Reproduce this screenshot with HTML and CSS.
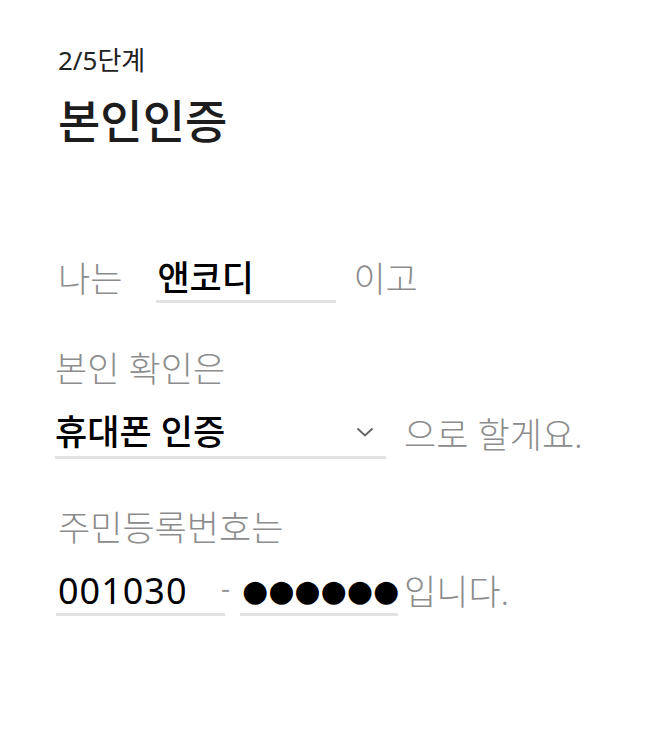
FILE: index.html
```html
<!DOCTYPE html>
<html>
<head>
  <title>본인인증</title>
  <link rel="stylesheet" href="styles.css">
</head>
<body>
  <div class="page">
    <p class="step">2/5단계</p>
    <h1 class="title">본인인증</h1>

    <div class="row row-name">
      <span class="label">나는</span>
      <input class="field name-field" type="text" value="앤코디">
      <span class="label">이고</span>
    </div>

    <p class="label question method-question">본인 확인은</p>
    <div class="row row-method">
      <div class="select-box">
        <span class="select-value">휴대폰 인증</span>
        <svg class="chevron" width="18" height="10" viewBox="0 0 18 10">
          <path d="M1.5 1.5 L9 8.5 L16.5 1.5" fill="none" stroke="#666" stroke-width="2"/>
        </svg>
      </div>
      <span class="label">으로 할게요.</span>
    </div>

    <p class="label question id-question">주민등록번호는</p>
    <div class="row row-id">
      <input class="field birth-field" type="text" value="001030">
      <span class="dash">-</span>
      <span class="field secret-field">●●●●●●</span>
      <span class="label tail">입니다.</span>
    </div>
  </div>
</body>
</html>
```

FILE: styles.css
```css
/* 본인인증 step page */
body {
  margin: 0;
  background: #fff;
  font-family: "Noto Sans", "Noto Sans CJK KR", sans-serif;
  color: #1d1d1d;
}

.page {
  padding: 42px 58px 40px 58px;
}

p {
  margin: 0;
}

.step {
  font-size: 26px;
  line-height: 36px;
  color: #222;
}

.title {
  margin: 14px 0 0 0;
  font-size: 46px;
  line-height: 56px;
  font-weight: 500;
  color: #1d1d1d;
}

.row {
  display: flex;
  align-items: flex-end;
}

.label {
  font-size: 35px;
  line-height: 48px;
  font-weight: 300;
  color: #8c8c8c;
}

.field {
  font-family: "Noto Sans", "Noto Sans CJK KR", sans-serif;
  font-size: 35px;
  line-height: 45px;
  height: 45px;
  padding: 0;
  border: none;
  border-bottom: 3px solid #e2e2e2;
  background: transparent;
  color: #000;
  outline: none;
}

.row-name {
  margin-top: 107px;
}

.name-field {
  width: 179px;
  margin: 0 17px 0 34px;
  padding-left: 1px;
  font-weight: 500;
}

.method-question {
  margin-top: 42px;
  margin-left: -3px;
}

.row-method {
  margin-top: 15px;
  margin-left: -3px;
}

.select-box {
  display: flex;
  align-items: center;
  width: 331px;
  height: 48px;
  border-bottom: 3px solid #e2e2e2;
  margin-right: 18px;
}

.select-value {
  flex: 1;
  font-size: 35px;
  line-height: 48px;
  font-weight: 500;
  color: #000;
}

.chevron {
  margin-right: 12px;
}

.id-question {
  margin-top: 45px;
}

.row-id {
  margin-top: 16px;
}

.birth-field {
  width: 167px;
  margin-left: -2px;
  padding-left: 2px;
  font-size: 36px;
  letter-spacing: 1px;
}

.dash {
  width: 15px;
  margin: 0 0 10px -4px;
  font-size: 28px;
  line-height: 38px;
  color: #999;
}

.secret-field {
  display: block;
  width: 156px;
  margin-left: 4px;
  padding-left: 2px;
  font-family: "DejaVu Sans", sans-serif;
  font-size: 30px;
  letter-spacing: 0;
}

.tail {
  margin-left: 6px;
}
```
